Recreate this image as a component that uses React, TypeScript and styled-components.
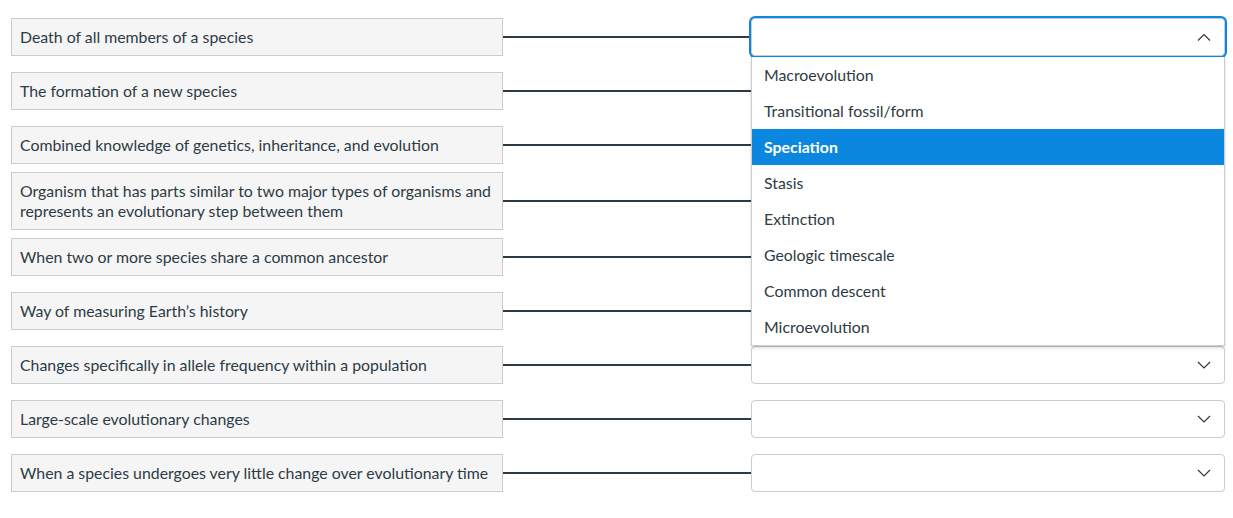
import React from "react";
import styled, { createGlobalStyle } from "styled-components";

const GlobalStyle = createGlobalStyle`
  body {
    margin: 0;
    background: #fff;
    font-family: Lato, "Open Sans", sans-serif;
    color: #2d3b45;
  }
`;

const Page = styled.div`
  padding: 10px 0 0 11px;
  width: 1214px;
`;

const Row = styled.div`
  display: grid;
  grid-template-columns: 492px 248px 474px;
  align-items: center;
  min-height: 54px;
`;

const Prompt = styled.div`
  box-sizing: border-box;
  background: #f5f5f5;
  border: 1px solid #c7cdd1;
  padding: 8px;
  font-size: 15.85px;
  line-height: 20px;
`;

const Connector = styled.div`
  height: 2px;
  background: #2d3b45;
`;

const SelectWrap = styled.div`
  position: relative;
`;

const SelectBox = styled.div<{ $open?: boolean }>`
  box-sizing: border-box;
  height: 38px;
  border: 1px solid #c7cdd1;
  border-radius: 4px;
  background: #fff;
  display: flex;
  align-items: center;
  justify-content: flex-end;
  padding-right: 13px;
  box-shadow: ${(p) => (p.$open ? "0 0 0 2px #0b87e0" : "none")};
`;

const Menu = styled.ul`
  position: absolute;
  top: 39px;
  left: 0;
  right: 0;
  margin: 0;
  padding: 0;
  list-style: none;
  background: #fff;
  border: 1px solid #c7cdd1;
  border-top: none;
  box-shadow: 0 2px 3px rgba(0, 0, 0, 0.15);
  z-index: 5;
`;

const Option = styled.li<{ $active?: boolean }>`
  box-sizing: border-box;
  height: 36px;
  display: flex;
  align-items: center;
  padding: 0 12px 2px;
  font-size: 15.85px;
  background: ${(p) => (p.$active ? "#0b87e0" : "transparent")};
  color: ${(p) => (p.$active ? "#fff" : "#2d3b45")};
  font-weight: ${(p) => (p.$active ? 700 : 400)};
`;

const Chevron = ({ up }: { up?: boolean }) => (
  <svg width="14" height="8" viewBox="0 0 14 8" fill="none">
    <path
      d={up ? "M1 7.5 L7 1.5 L13 7.5" : "M1 1 L7 7 L13 1"}
      stroke="#2d3b45"
      strokeWidth="1.2"
    />
  </svg>
);

const prompts = [
  "Death of all members of a species",
  "The formation of a new species",
  "Combined knowledge of genetics, inheritance, and evolution",
  "Organism that has parts similar to two major types of organisms and represents an evolutionary step between them",
  "When two or more species share a common ancestor",
  "Way of measuring Earth\u2019s history",
  "Changes specifically in allele frequency within a population",
  "Large-scale evolutionary changes",
  "When a species undergoes very little change over evolutionary time",
];

const options = [
  "Macroevolution",
  "Transitional fossil/form",
  "Speciation",
  "Stasis",
  "Extinction",
  "Geologic timescale",
  "Common descent",
  "Microevolution",
];

export default function App() {
  return (
    <>
      <GlobalStyle />
      <Page>
        {prompts.map((text, i) => (
          <Row key={i}>
            <Prompt>{text}</Prompt>
            <Connector />
            <SelectWrap>
              <SelectBox $open={i === 0}>
                <Chevron up={i === 0} />
              </SelectBox>
              {i === 0 && (
                <Menu>
                  {options.map((o) => (
                    <Option key={o} $active={o === "Speciation"}>
                      {o}
                    </Option>
                  ))}
                </Menu>
              )}
            </SelectWrap>
          </Row>
        ))}
      </Page>
    </>
  );
}
